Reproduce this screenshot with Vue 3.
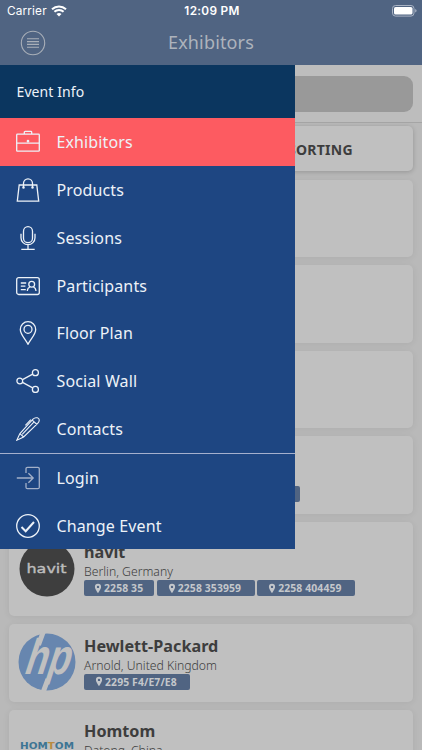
<script setup>
const menu = [
  { icon: 'case', label: 'Exhibitors', active: true },
  { icon: 'bag', label: 'Products' },
  { icon: 'mic', label: 'Sessions' },
  { icon: 'badge', label: 'Participants' },
  { icon: 'pin', label: 'Floor Plan' },
  { icon: 'share', label: 'Social Wall' },
  { icon: 'pen', label: 'Contacts' },
  { icon: 'login', label: 'Login', divided: true },
  { icon: 'check', label: 'Change Event' }
]
const exhibitors = [
  { logo: 'havit', name: 'havit', place: 'Berlin, Germany', tall: true, stands: ['2258 35', '2258 353959', '2258 404459'] },
  { logo: 'hp', name: 'Hewlett-Packard', place: 'Arnold, United Kingdom', stands: ['2295 F4/E7/E8'] },
  { logo: 'homtom', name: 'Homtom', place: 'Datong, China', stands: [] }
]
</script>

<template>
  <div class="screen">
    <header class="top">
      <div class="status">
        <div class="carrier">
          <span>Carrier</span>
          <svg class="wifi" viewBox="0 0 16 12">
            <path d="M1 4.3a10.2 10.2 0 0 1 14 0M3.4 6.8a6.7 6.7 0 0 1 9.2 0" fill="none" stroke="#fff" stroke-width="2" />
            <path d="M5.5 9.1a3.6 3.6 0 0 1 5 0L8 11.6z" fill="#fff" />
          </svg>
        </div>
        <span class="clock">12:09 PM</span>
        <svg class="battery" viewBox="0 0 25 12">
          <rect x=".5" y=".5" width="21.5" height="10.6" rx="3" fill="none" stroke="#a9b3c4" />
          <rect x="2" y="2" width="18.5" height="7.6" rx="1.6" fill="#fff" />
          <path d="M23.2 4v3.6q1.4-.5 1.4-1.8T23.2 4z" fill="#a9b3c4" />
        </svg>
      </div>
      <div class="bar">
        <svg class="burger" viewBox="0 0 26 26">
          <circle cx="13" cy="13" r="11.7" />
          <path d="M7 8.8h12M7 11.6h12M7 14.4h12M7 17.2h12" />
        </svg>
        <h1>Exhibitors</h1>
      </div>
    </header>

    <div class="search"><div class="field"></div></div>

    <main class="list">
      <div class="tools"><span class="sorting">SORTING</span></div>
      <div class="card"></div>
      <div class="card"></div>
      <div class="card"></div>
      <div class="card partial"><div class="stand wide"></div></div>

      <article v-for="e in exhibitors" :key="e.name" class="card company" :class="{ tall: e.tall }">
        <svg class="logo" viewBox="0 0 58 58">
          <template v-if="e.logo === 'havit'">
            <circle cx="29" cy="27" r="27.5" fill="#3e3e3e" />
            <text class="havit" x="8.5" y="31" textLength="40" lengthAdjust="spacingAndGlyphs">havit</text>
          </template>
          <template v-else-if="e.logo === 'hp'">
            <circle cx="29" cy="29" r="28.5" fill="#6786af" />
            <path d="M25.2-1L20.5 12M24.8 60L30 46" stroke="#c0c0c0" stroke-width="5" fill="none" />
            <text class="hp" transform="translate(4.5 41) skewX(-18)" textLength="45" lengthAdjust="spacingAndGlyphs">hp</text>
          </template>
          <template v-else>
            <text class="homtom" x="2" y="29.5" textLength="54" lengthAdjust="spacingAndGlyphs">HOM<tspan fill="#b88a42">T</tspan>OM</text>
          </template>
        </svg>
        <div class="info">
          <h2>{{ e.name }}</h2>
          <p>{{ e.place }}</p>
          <div class="stands">
            <span v-for="s in e.stands" :key="s" class="stand">
              <svg viewBox="0 0 8 11"><path fill-rule="evenodd" d="M4 .8a3.1 3.1 0 0 0-3.1 3.1C.9 6 4 10 4 10s3.1-4 3.1-6.1A3.1 3.1 0 0 0 4 .8zm0 1.9a1.2 1.2 0 1 1 0 2.4 1.2 1.2 0 0 1 0-2.4z" /></svg>
              {{ s }}
            </span>
          </div>
        </div>
      </article>
    </main>

    <nav class="menu">
      <div class="heading">Event Info</div>
      <div v-for="m in menu" :key="m.label" class="item" :class="{ active: m.active, divided: m.divided }">
        <svg class="icon" :class="m.icon" viewBox="0 0 24 24">
          <g v-if="m.icon === 'case'">
            <rect x=".7" y="4.2" width="22.6" height="17" rx=".8" />
            <path d="M8.3 4V2.2q0-.8.8-.8h5.8q.8 0 .8.8V4M.7 13.2h22.6" />
            <circle cx="12" cy="11.2" r=".7" />
          </g>
          <g v-else-if="m.icon === 'bag'">
            <path d="M3.2 7h17.6l1.9 16.2H1.3zM7.5 10V5.3a4.5 4.5 0 0 1 9 0V10" />
            <circle cx="7.5" cy="9.5" r=".6" /><circle cx="16.5" cy="9.5" r=".6" />
          </g>
          <g v-else-if="m.icon === 'mic'">
            <rect x="7.5" y=".7" width="9" height="16" rx="4.5" />
            <path d="M5 7.7v4a7 7 0 0 0 14 0v-4M12 18.7v4.6M5.3 23.3h13.4" />
          </g>
          <g v-else-if="m.icon === 'badge'">
            <rect x=".7" y="3.7" width="22.6" height="16.8" rx="2" />
            <path d="M4.8 9h5.4M4.8 12.2h4.6M4.8 15.6h5M11.3 17c.2-2.6 1.1-3.5 2.6-4M20 17c-.2-2.6-1.1-3.5-2.6-4" />
            <circle cx="15.7" cy="10.2" r="2.9" />
          </g>
          <g v-else-if="m.icon === 'pin'">
            <path d="M12 23.2C9.5 18 4.3 13.5 4.3 8.4a7.7 7.7 0 0 1 15.4 0c0 5.1-5.2 9.6-7.7 14.8z" />
            <circle cx="12" cy="8.3" r="4" />
          </g>
          <g v-else-if="m.icon === 'share'">
            <circle cx="3.8" cy="12" r="2.9" /><circle cx="19.4" cy="3.7" r="3" /><circle cx="19.4" cy="20.4" r="3" />
            <path d="M6.5 10.6l10.2-5.5M6.5 13.4l10.2 5.5" />
          </g>
          <g v-else-if="m.icon === 'pen'" class="thin">
            <path d="M.8 23.2l3.1-6.6L17 2.2q1.5-1.4 3-1.4h1.3q1.8.4 2 2.2 0 1.8-1.6 3.4L7.6 20zM3.9 16.6L7.6 20M16.2 3.2l4.8 4.3M14.8 2.6l-5.4 5.8M6.2 17.4L17.8 5.2" />
          </g>
          <g v-else-if="m.icon === 'login'">
            <path d="M10 7V2.8Q10 1.3 11.5 1.3h10.3q1.5 0 1.5 1.5v18.4q0 1.5-1.5 1.5H11.5q-1.5 0-1.5-1.5V17M.8 12h16.4M12.4 7.2l4.8 4.8-4.8 4.8" />
          </g>
          <g v-else>
            <circle cx="12" cy="12" r="11.3" />
            <path class="tick" d="M5.5 13l4.2 4.2L18 8" />
          </g>
        </svg>
        <span>{{ m.label }}</span>
      </div>
    </nav>
  </div>
</template>

<style>
body { margin: 0; background: #bdbdbd; overflow: hidden; }
</style>

<style scoped>
* { box-sizing: border-box; }
.screen { position: relative; width: 422px; height: 750px; overflow: hidden; background: #bdbdbd; font-family: "Noto Sans", "Open Sans", sans-serif; color: #3d3d3d; }
.top { height: 65.4px; background: #506482; }
.status { display: grid; grid-template-columns: 1fr auto 1fr; align-items: center; height: 22px; padding: 0 5px 0 7px; color: #fff; font-family: Inter, Roboto, sans-serif; font-size: 11.8px; line-height: 22px; }
.carrier { display: flex; align-items: center; gap: 4px; letter-spacing: .15px; }
.wifi { width: 16px; height: 12px; }
.clock { font-weight: 600; letter-spacing: .3px; }
.battery { width: 25px; height: 12px; justify-self: end; }
.bar { display: grid; grid-template-columns: 60px 1fr 60px; align-items: center; height: 42px; }
.burger { width: 26px; height: 26px; margin-left: 20px; fill: none; stroke: #a9afb8; stroke-width: 1.1; }
.bar h1 { margin: 0; text-align: center; font-size: 18px; letter-spacing: .15px; font-weight: 400; line-height: 41px; padding-bottom: 1px; color: #adb3bc; }
.search { height: 57.6px; padding: 10.5px 9px; border-bottom: 1px solid #a5a5a5; }
.field { height: 36px; border-radius: 9px; background: #999; }
.list { display: flex; flex-direction: column; gap: 8px; padding: 3px 9px 0; background: #b9b9b9; }
.tools, .card { flex: none; border-radius: 5px; background: #c0c0c0; box-shadow: 0 1px 7px rgba(0, 0, 0, .07); }
.tools { height: 45.5px; margin-bottom: .5px; display: flex; align-items: center; justify-content: flex-end; padding-right: 60px; box-shadow: 0 1px 5px rgba(0, 0, 0, .2); }
.sorting { font-size: 14px; letter-spacing: .3px; font-weight: 700; padding-top: 1px; }
.card { height: 77.5px; }
.partial { padding: 50px 0 0 150px; }
.company { display: flex; padding: 9px 9px 0; }
.tall { height: 94.5px; padding-top: 20px; }
.logo { width: 58px; height: 58px; flex: none; }
.info { padding: 1.5px 0 0 8px; }
.tall .info { margin-top: -2px; }
.info h2 { margin: 0; font-size: 16.2px; font-weight: 700; line-height: 22px; }
.info p { margin: 0; font-size: 12.2px; font-weight: 300; line-height: 17px; }
.stands { display: flex; gap: 2.5px; }
.stand { display: flex; align-items: center; justify-content: center; gap: 2px; height: 16px; padding: 0 13.5px 0 11px; border-radius: 2px; background: #506482; color: #c4c7cb; font-size: 10.4px; letter-spacing: .12px; font-weight: 700; line-height: 16px; white-space: nowrap; }
.stand svg { width: 8px; height: 11px; fill: #c4c7cb; }
.tall .stand:first-child { padding: 0 11px 0 10px; }
.wide { width: 141px; }
.havit { font: 400 13px "DejaVu Sans", sans-serif; fill: #bdbdbd; stroke: #bdbdbd; stroke-width: .4; }
.hp { font: 700 50px "Liberation Sans", sans-serif; fill: #c0c0c0; }
.homtom { font: 700 8px "DejaVu Sans", sans-serif; fill: #3d7594; }
.menu { position: absolute; left: 0; top: 65.4px; width: 295.4px; height: 484px; background: #1e4682; color: #edf2f8; overflow: hidden; }
.heading { height: 52.2px; padding-left: 16.5px; background: #0b365f; font-size: 14px; letter-spacing: .1px; line-height: 53.4px; }
.item { display: flex; align-items: center; gap: 16.5px; height: 47.8px; padding-left: 16px; font-size: 16px; letter-spacing: .12px; }
.active { height: 48.5px; background: #fd5b61; }
.divided { height: 49px; border-top: 1.5px solid #a5b0cd; }
.icon { width: 24px; height: 24px; fill: none; stroke: #edf2f8; stroke-width: 1.3; }
.login { stroke: #a3b0c8; }
.thin { stroke-width: 1.1; }
.tick { stroke-width: 2; }
</style>
